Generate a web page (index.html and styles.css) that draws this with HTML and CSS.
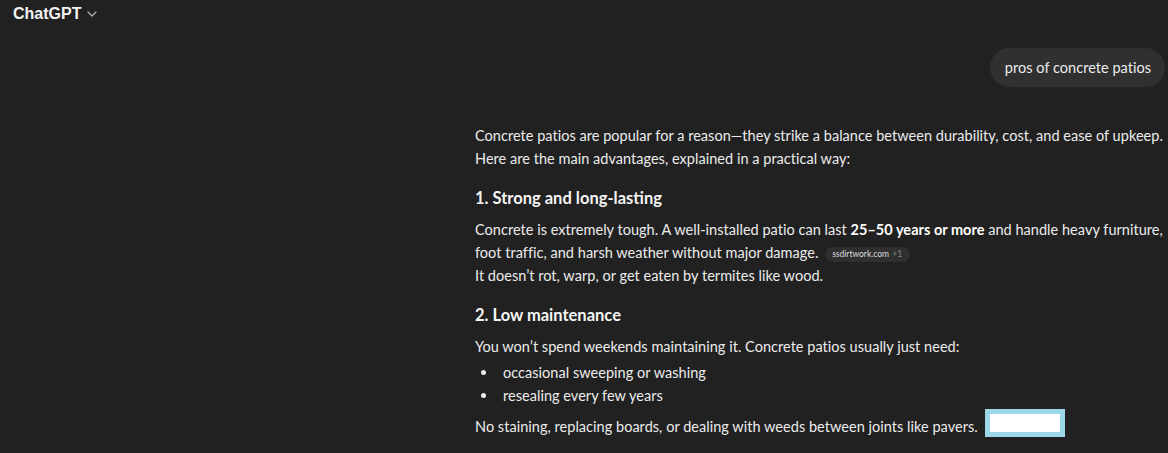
FILE: index.html
```html
<!DOCTYPE html>
<html>
<head>
<meta charset="utf-8">
<link rel="stylesheet" href="styles.css">
</head>
<body>
<header class="topbar">
  <span class="brand">ChatGPT</span>
  <svg class="chev" width="10" height="6" viewBox="0 0 10 6"><path d="M1 1l4 4 4-4" fill="none" stroke="#b4b4b4" stroke-width="1.2" stroke-linecap="round" stroke-linejoin="round"/></svg>
</header>
<main class="thread">
  <div class="user-row">
    <div class="bubble">pros of concrete patios</div>
  </div>
  <article class="answer">
    <p>Concrete patios are popular for a reason—they strike a balance between durability, cost, and ease of upkeep.<br>Here are the main advantages, explained in a practical way:</p>
    <h3>1. Strong and long-lasting</h3>
    <p>Concrete is extremely tough. A well-installed patio can last <strong>25–50 years or more</strong> and handle heavy furniture,<br>foot traffic, and harsh weather without major damage. <span class="cite">ssdirtwork.com <span class="plus">+1</span></span><br>It doesn’t rot, warp, or get eaten by termites like wood.</p>
    <h3>2. Low maintenance</h3>
    <p class="lead">You won’t spend weekends maintaining it. Concrete patios usually just need:</p>
    <ul>
      <li>occasional sweeping or washing</li>
      <li>resealing every few years</li>
    </ul>
    <p>No staining, replacing boards, or dealing with weeds between joints like pavers. <span class="box"></span></p>
  </article>
</main>
</body>
</html>
```

FILE: styles.css
```css
* { box-sizing: border-box; }
html, body { margin: 0; padding: 0; }
body {
  background: #212121;
  color: #ececec;
  font-family: Lato, "Liberation Sans", sans-serif;
  font-size: 14.5px;
  letter-spacing: 0.03px;
  width: 1168px;
  height: 453px;
  overflow: hidden;
}
.topbar {
  display: flex;
  align-items: center;
  gap: 6px;
  padding: 0 0 0 13px;
  height: 27px;
}
.brand {
  font-family: "Liberation Sans", sans-serif;
  font-weight: 700;
  font-size: 16px;
  letter-spacing: 0;
  color: #f3f3f3;
}
.chev { margin-top: 1px; }
.thread {
  padding-left: 475px;
}
.user-row {
  display: flex;
  justify-content: flex-end;
  padding-top: 21px;
  padding-right: 3px;
}
.bubble {
  background: #303030;
  border-radius: 20px;
  height: 39px;
  padding: 0 14px 0 15px;
  display: flex;
  align-items: center;
  font-size: 14.5px;
  white-space: nowrap;
}
.answer {
  padding-top: 37px;
  white-space: nowrap;
}
p {
  margin: 0 0 16px;
  line-height: 23px;
}
p.lead { margin-bottom: 3px; }
h3 {
  font-size: 16.5px;
  font-weight: 700;
  margin: 0 0 8px;
  line-height: 24px;
  letter-spacing: 0;
  color: #f5f5f5;
}
strong { font-weight: 700; color: #fff; }
.cite {
  display: inline-block;
  background: #2f2f2f;
  color: #dcdcdc;
  font-size: 8.5px;
  letter-spacing: 0;
  line-height: 15px;
  height: 15px;
  padding: 0 8px 0 7px;
  border-radius: 8px;
  vertical-align: 1px;
  margin-left: 3px;
}
.plus { color: #8a8a8a; margin-left: 1px; }
ul {
  list-style: none;
  margin: 0 0 8px;
  padding: 0;
}
li { line-height: 23px; }
li::before {
  content: "";
  display: inline-block;
  width: 5px;
  height: 5px;
  border-radius: 50%;
  background: #ececec;
  margin: 0 17px 0 6px;
  vertical-align: 3px;
}
.box {
  display: inline-block;
  width: 80px;
  height: 28px;
  background: #fff;
  border: 5px solid #9bd8e8;
  vertical-align: -5px;
  margin-top: -6px;
  margin-left: 4px;
}
```
